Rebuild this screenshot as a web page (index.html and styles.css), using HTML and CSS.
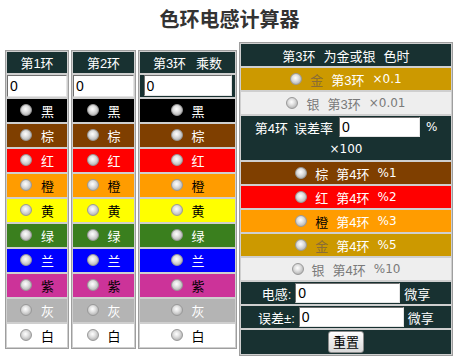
FILE: index.html
```html
<!DOCTYPE html>
<html>
<head>
<meta charset="utf-8">
<title>色环电感计算器</title>
<link rel="stylesheet" href="styles.css">
</head>
<body>
<div class="title">色环电感计算器</div>
<div class="main">
  <div class="col c1">
    <div class="hd">第1环</div>
    <div class="inrow"><input class="num" value="0"></div>
    <label class="cell k-black"><input class="rd" type="radio" name="r1"><span>黑</span></label>
    <label class="cell k-brown"><input class="rd" type="radio" name="r1"><span>棕</span></label>
    <label class="cell k-red"><input class="rd" type="radio" name="r1"><span>红</span></label>
    <label class="cell k-orange"><input class="rd" type="radio" name="r1"><span>橙</span></label>
    <label class="cell k-yellow"><input class="rd" type="radio" name="r1"><span>黄</span></label>
    <label class="cell k-green"><input class="rd" type="radio" name="r1"><span>绿</span></label>
    <label class="cell k-blue"><input class="rd" type="radio" name="r1"><span>兰</span></label>
    <label class="cell k-purple"><input class="rd" type="radio" name="r1"><span>紫</span></label>
    <label class="cell k-gray"><input class="rd" type="radio" name="r1"><span>灰</span></label>
    <label class="cell k-white"><input class="rd" type="radio" name="r1"><span>白</span></label>
  </div>
  <div class="col c2">
    <div class="hd">第2环</div>
    <div class="inrow"><input class="num" value="0"></div>
    <label class="cell k-black"><input class="rd" type="radio" name="r2"><span>黑</span></label>
    <label class="cell k-brown"><input class="rd" type="radio" name="r2"><span>棕</span></label>
    <label class="cell k-red"><input class="rd" type="radio" name="r2"><span>红</span></label>
    <label class="cell k-orange"><input class="rd" type="radio" name="r2"><span>橙</span></label>
    <label class="cell k-yellow"><input class="rd" type="radio" name="r2"><span>黄</span></label>
    <label class="cell k-green"><input class="rd" type="radio" name="r2"><span>绿</span></label>
    <label class="cell k-blue"><input class="rd" type="radio" name="r2"><span>兰</span></label>
    <label class="cell k-purple"><input class="rd" type="radio" name="r2"><span>紫</span></label>
    <label class="cell k-gray"><input class="rd" type="radio" name="r2"><span>灰</span></label>
    <label class="cell k-white"><input class="rd" type="radio" name="r2"><span>白</span></label>
  </div>
  <div class="col c3">
    <div class="hd"><span>第3环</span><span class="sp">乘数</span></div>
    <div class="inrow"><input class="num num3" value="0"></div>
    <label class="cell k-black"><input class="rd" type="radio" name="r3"><span>黑</span></label>
    <label class="cell k-brown"><input class="rd" type="radio" name="r3"><span>棕</span></label>
    <label class="cell k-red"><input class="rd" type="radio" name="r3"><span>红</span></label>
    <label class="cell k-orange"><input class="rd" type="radio" name="r3"><span>橙</span></label>
    <label class="cell k-yellow"><input class="rd" type="radio" name="r3"><span>黄</span></label>
    <label class="cell k-green"><input class="rd" type="radio" name="r3"><span>绿</span></label>
    <label class="cell k-blue"><input class="rd" type="radio" name="r3"><span>兰</span></label>
    <label class="cell k-purple"><input class="rd" type="radio" name="r3"><span>紫</span></label>
    <label class="cell k-gray"><input class="rd" type="radio" name="r3"><span>灰</span></label>
    <label class="cell k-white"><input class="rd" type="radio" name="r3"><span>白</span></label>
  </div>
  <div class="col panel">
    <div class="prow hdp"><span>第3环</span><span>为金或银</span><span>色时</span></div>
    <label class="prow k-gold"><input class="rd" type="radio" name="r3"><span class="t-gold">金</span><span>第3环</span><span class="lat">×0.1</span></label>
    <label class="prow k-silver"><input class="rd" type="radio" name="r3"><span>银</span><span>第3环</span><span class="lat">×0.01</span></label>
    <div class="prow hdp ring4">
      <div class="line1"><span>第4环</span><span>误差率</span><input class="num n4" value="0"><span class="lat">%</span></div>
      <div class="line2 lat">×100</div>
    </div>
    <label class="prow k-brown"><input class="rd" type="radio" name="r4"><span>棕</span><span>第4环</span><span class="lat">%1</span></label>
    <label class="prow k-red"><input class="rd" type="radio" name="r4"><span>红</span><span>第4环</span><span class="lat">%2</span></label>
    <label class="prow k-orange p-or"><input class="rd" type="radio" name="r4"><span class="t-black">橙</span><span>第4环</span><span class="lat">%3</span></label>
    <label class="prow k-gold"><input class="rd" type="radio" name="r4"><span class="t-gold">金</span><span>第4环</span><span class="lat">%5</span></label>
    <label class="prow k-silver"><input class="rd" type="radio" name="r4"><span>银</span><span>第4环</span><span class="lat">%10</span></label>
    <div class="prow hdp res"><span>电感:</span><input class="num nres" value="0"><span>微享</span></div>
    <div class="prow hdp res"><span>误差±:</span><input class="num nres" value="0"><span>微享</span></div>
    <div class="prow hdp btnrow"><button class="btn" type="button">重置</button></div>
  </div>
</div>
</body>
</html>
```

FILE: styles.css
```css
html, body {
  margin: 0;
  padding: 0;
  background: #ffffff;
}
body {
  width: 459px;
  height: 363px;
  overflow: hidden;
  font-family: "Liberation Sans", "Noto Sans CJK SC", sans-serif;
  font-size: 13px;
  color: #fff;
}
.title {
  height: 42px;
  line-height: 38px;
  text-align: center;
  font-family: "Noto Sans CJK SC", sans-serif;
  font-weight: bold;
  font-size: 20px;
  color: #333333;
}
.main {
  display: flex;
  align-items: center;
  gap: 2px;
  padding-left: 5px;
}
.col {
  box-sizing: border-box;
  display: flex;
  flex-direction: column;
  gap: 2px;
  padding: 1px;
  border: 1px solid #9e9e9e;
  background: #cfcfcf;
}
.c1 { width: 64px; }
.c2 { width: 65px; }
.c3 { width: 99px; }
.panel { width: 214px; }

.hd {
  height: 21px;
  background: #183131;
  display: flex;
  align-items: center;
  justify-content: center;
  gap: 10px;
}
.inrow {
  height: 22px;
  background: #183131;
  display: flex;
  align-items: center;
  justify-content: center;
}
.num {
  box-sizing: border-box;
  width: 100%;
  height: 22px;
  margin: 0;
  padding: 0 2px;
  border: 1px solid;
  border-color: #6f6f6f #e4e4e4 #e4e4e4 #6f6f6f;
  background: #fff;
  color: #000;
  font-family: "Liberation Sans", sans-serif;
  font-size: 14px;
  outline: none;
}
.num3 { width: 88px; height: 21px; }
.n4 { width: 81px; height: 20px; }
.nres { width: 105px; height: 20px; }

.cell {
  height: 23px;
  display: flex;
  align-items: center;
  justify-content: center;
  gap: 9px;
}
.cell span { width: 13px; }
.rd {
  appearance: none;
  -webkit-appearance: none;
  box-sizing: border-box;
  width: 12px;
  height: 12px;
  margin: 0;
  border-radius: 50%;
  border: 1px solid #999999;
  background: radial-gradient(circle at 45% 40%, #ffffff 0, #e2e2e2 35%, #b4b4b4 78%, #949494 100%);
}

.k-black { background: #000000; color: #fff; }
.k-brown { background: #7f3f00; color: #fff; }
.k-red { background: #ff0000; color: #fff; }
.k-orange { background: #ff9c00; color: #000; }
.k-yellow { background: #ffff00; color: #000; }
.k-green { background: #3a7f1e; color: #fff; }
.k-blue { background: #0000ff; color: #fff; }
.k-purple { background: #cc3399; color: #000; }
.k-gray { background: #b4b4b4; color: #fff; }
.k-white { background: #ffffff; color: #000; }
.k-gold { background: #cc9900; color: #fff; }
.k-silver { background: #eeeeee; color: #7a7a7a; }

.prow {
  height: 22px;
  display: flex;
  align-items: center;
  justify-content: center;
  gap: 8px;
}
.hdp { background: #183131; color: #fff; }
.p-or { color: #fff; }
.t-black { color: #000; }
.t-gold { color: #8a6d36; }
.lat {
  font-family: "DejaVu Sans", sans-serif;
  font-size: 12px;
}
.ring4 {
  height: 44px;
  flex-direction: column;
  gap: 0;
}
.line1 {
  height: 22px;
  display: flex;
  align-items: center;
  justify-content: center;
  gap: 6px;
}
.line2 {
  height: 22px;
  line-height: 22px;
}
.res { gap: 4px; }
.btnrow { height: 24px; }
.btn {
  box-sizing: border-box;
  width: 36px;
  height: 22px;
  margin: 0;
  padding: 0;
  border: 1px solid #8c8c8c;
  border-radius: 3px;
  background: linear-gradient(#fdfdfd, #d9d9d9);
  color: #000;
  font-family: "Noto Sans CJK SC", sans-serif;
  font-size: 13px;
  line-height: 20px;
}
```
